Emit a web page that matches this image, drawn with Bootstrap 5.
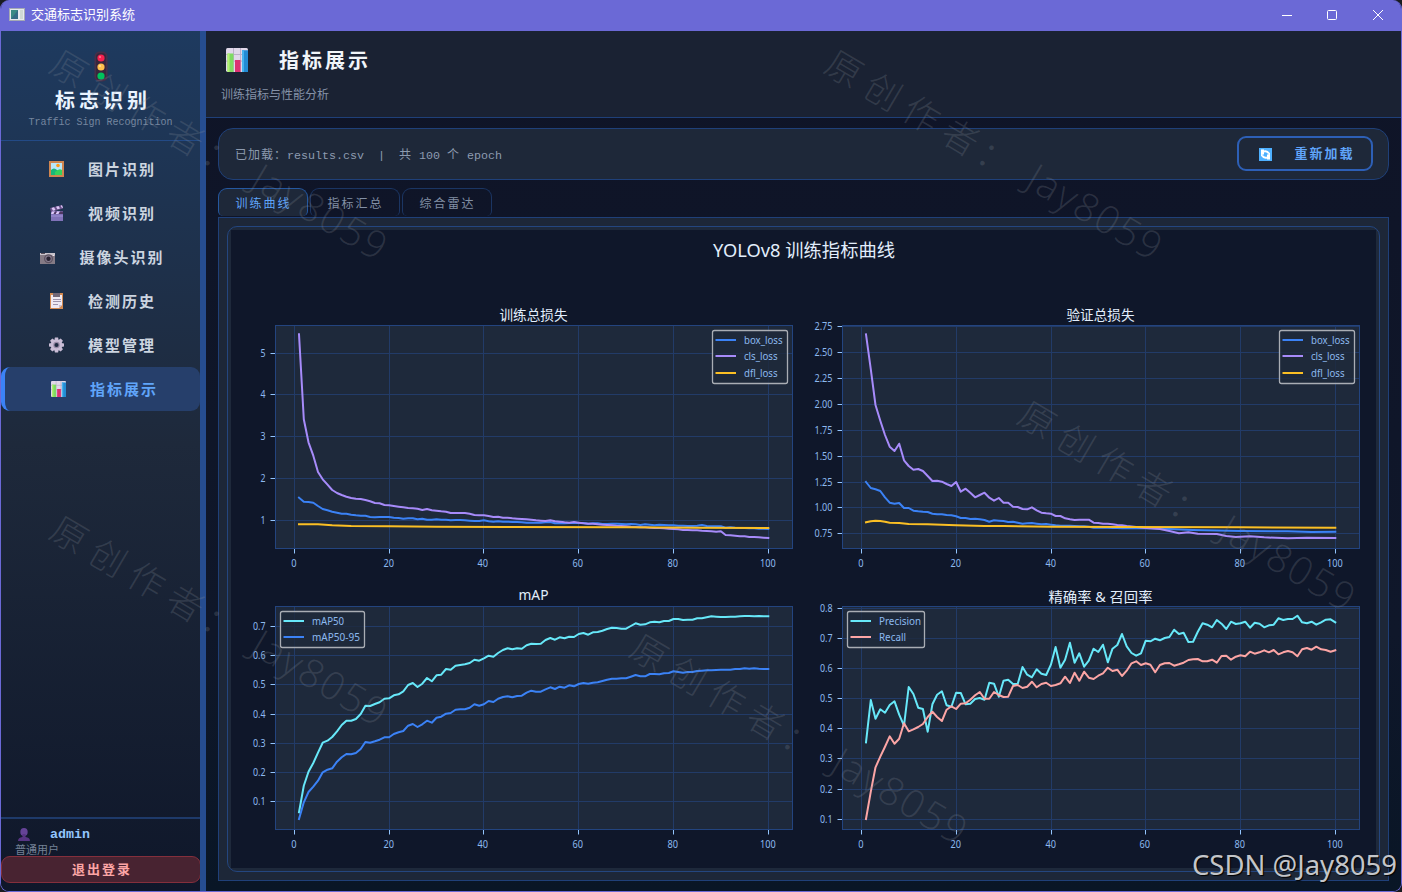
<!DOCTYPE html>
<html lang="zh-CN" data-bs-theme="dark">
<head>
<meta charset="utf-8">
<title>交通标志识别系统</title>
<link href="https://cdn.jsdelivr.net/npm/bootstrap@5.3.0/dist/css/bootstrap.min.css" rel="stylesheet">
<style>
  :root { --line:#1f4079; --panel:#1e2839; }
  body { background:#191b20; height:100vh; overflow:hidden; line-height:1; font-family:"Noto Sans","Noto Sans CJK SC",sans-serif; }
  svg { display:block; flex:none; }
  .window { height:892px; border:1px solid #6b69d6; border-top:0; border-radius:9px; overflow:hidden; background:#0f172a; }
  .titlebar { height:31px; flex:none; background:#6b69d6; color:#fff; font-size:13px; padding:0 17px 2px 8px; }
  .titlebar-text { margin-left:6px; }
  .side { width:199px; flex:none; background:linear-gradient(#1e3a5f 0,#1e293b 48%,#0f172a 100%); }
  .brand { height:110px; border-bottom:1px solid #234a86; padding-top:20px; }
  .brand-name { font-size:20px; font-weight:700; letter-spacing:4px; margin:9px 0 0 5px; color:#eaf4ff; }
  .brand-sub { font:10px/12px "Liberation Mono",monospace; color:#75869f; margin-top:6px; }
  .menu-item { height:44px; font-size:15px; font-weight:700; letter-spacing:2px; color:#ccd5e0; gap:24px; padding-left:4px; }
  .menu-item.active { background:#263f6b; color:#60a5fa; border-radius:9px; border-left:4px solid #3b82f6; }
  .user { border-top:2px solid #1e3a6a; height:74px; }
  .user-name { font:700 13.3px/14px "Liberation Mono",monospace; color:#93c5fd; }
  .user-role { font-size:11px; color:#748196; margin:2px 0 0 14px; }
  .logout { height:27px; background:#482331; border:1px solid #842f3c; border-radius:9px; color:#fca5a5; font-size:13px; font-weight:700; letter-spacing:2px; padding:0 0 0 2px; line-height:1; width:200px; }
  .splitter { width:6px; flex:none; background:#264d90; }
  .content { background:linear-gradient(#0f1427,#0f172a 70%,#091626); }
  .page-head { height:87px; flex:none; background:#1a2233; border-bottom:1px solid var(--line); padding:16px 0 0 15px; }
  .page-title { font-size:20px; font-weight:700; letter-spacing:3px; color:#f1f5f9; margin:2px 0 0 31px; }
  .page-sub { font-size:12px; color:#8592a8; margin-top:16px; }
  .toolbar { height:52px; margin:10px 12px 0; background:var(--panel); border:1px solid var(--line); border-radius:15px; padding:0 15px 1px 16px; }
  .info { white-space:pre; font-size:12px; letter-spacing:1px; color:#8d9bb0; padding-top:4px; }
  .info span { font:11.67px "Liberation Mono",monospace; letter-spacing:0; }
  .reload { width:136px; height:35px; border:2px solid #2d5fb6; border-radius:9px; color:#60a5fa; font-size:13px; font-weight:700; letter-spacing:2px; gap:22px; padding:1px 0 0 4px; }
  .reload:hover, .logout:hover { color:inherit; }
  .tabs { margin:8px 12px 0; gap:2px; height:29px; }
  .tab-btn { width:90px; height:28px; border:1px solid #1b3562; border-bottom:0; border-radius:9px 9px 5px 5px; font-size:12px; letter-spacing:2px; color:#8290a5; padding:2px 0 0 1px; }
  .tab-btn.active { background:var(--panel); border-color:#2558a0; color:#60a5fa; }
  .pane { margin:0 12px 10px; background:#1d2738; border:1px solid var(--line); padding:8px; min-height:0; }
  .frame-box { border:1px solid #24467f; border-radius:10px; padding:3px; height:100%; background:#1e293b; }
  .figure-svg { background:#0f172a; width:100%; height:100%; font-family:"Noto Sans","Noto Sans CJK SC",sans-serif; }
  .overlay { position:absolute; inset:0; pointer-events:none; }
</style>
</head>
<body>
<div class="window d-flex flex-column position-relative">
  <header class="titlebar d-flex align-items-center">
    <svg width="16" height="13" viewBox="0 0 16 13"><rect x=".5" y=".5" width="15" height="12" fill="#e6e9ee" stroke="#a5aab4"/><rect x="2" y="2" width="7" height="9" fill="#3a8a85"/><path d="M2 11 9 2v9z" fill="#346b86"/><path d="M11 2h3v9h-3z" fill="#cfd8d4"/></svg>
    <span class="titlebar-text">交通标志识别系统</span>
    <div class="ms-auto d-flex align-items-center">
      <svg width="102" height="12" viewBox="0 0 102 12" fill="none" stroke="#fff"><path d="M0 6.500h10"/><rect x="45.500" y="1.500" width="9" height="9" rx="1"/><path d="m91 1 10 10m0-10L91 11"/></svg>
    </div>
  </header>

  <div class="d-flex flex-grow-1" style="min-height:0">
    <aside class="side d-flex flex-column">
      <div class="brand d-flex flex-column align-items-center">
        <svg width="14" height="31" viewBox="0 0 14 31"><rect x=".5" y=".5" width="13" height="30" rx="5" fill="#46304a"/><rect x="2" y="2" width="10" height="27" rx="4" fill="#38273d"/><circle cx="7" cy="7" r="3.600" fill="#f8214e"/><circle cx="7" cy="16" r="3.600" fill="#ffc04d"/><circle cx="7" cy="25" r="3.600" fill="#00c35d"/><circle cx="6" cy="6" r="1" fill="#ff8196"/><circle cx="6" cy="15" r="1" fill="#ffe0a2"/></svg>
        <div class="brand-name">标志识别</div>
        <div class="brand-sub">Traffic Sign Recognition</div>
      </div>
      <nav class="d-flex flex-column flex-grow-1" style="padding-top:6px">
        <div class="menu-item d-flex align-items-center justify-content-center">
          <svg width="15" height="16" viewBox="0 0 15 16"><path fill="#cf8550" d="M0 0h15v16H0z"/><path fill="#b8e6fa" d="M2 2h11v12H2z"/><circle cx="9" cy="4.500" r="1.800" fill="#ff9b1a"/><path d="M2 9q3-3 6 0l5 5H2z" fill="#18b77a"/><path d="M6 11q4-4 7-2v5H6z" fill="#36d15e"/></svg><span>图片识别</span></div>
        <div class="menu-item d-flex align-items-center justify-content-center">
          <svg width="15" height="16" viewBox="0 0 15 16"><path d="M2 6h12v10H2z" fill="#8072b8"/><path d="M2 10h12v2H2z" fill="#9082c6"/><path d="m1 3 12-3 1 3.500L2 7z" fill="#6b528b"/><path d="m2.500 3 2.500-.8L6.500 5l-2.500.8zM7 1.800l2.500-.8L11 3.500l-2.500.8zM11.500.7 13 .2l1 2.500-1 .3zM3 6.500h3L4.500 9H2zM8 6.500h3L9.500 9h-3z" fill="#ddc8f8"/><path d="M6 6.500h2L6.500 9h-2zM11 6.500h3V9H9.500z" fill="#4e3762"/></svg><span>视频识别</span></div>
        <div class="menu-item d-flex align-items-center justify-content-center">
          <svg width="15" height="16" viewBox="0 0 15 16"><path d="M0 4h15v11H0z" fill="#857b86"/><path d="M0 4h15v2H0z" fill="#c9c4cc"/><path d="M1 4h4v1H1z" fill="#5a4e59"/><circle cx="8.500" cy="9.800" r="4.500" fill="#5c5260"/><circle cx="8.500" cy="9.800" r="3.200" fill="#8a7f92"/><circle cx="8.500" cy="9.800" r="2.200" fill="#292332"/><path d="M12.500 6h2v1h-2z" fill="#ece5ee"/></svg><span>摄像头识别</span></div>
        <div class="menu-item d-flex align-items-center justify-content-center">
          <svg width="15" height="16" viewBox="0 0 15 16"><path d="M1 0h13v16H1z" fill="#d28a52"/><path d="M2 2h11v10l-3 3H2z" fill="#eee9f3"/><path d="M10 15v-3h3z" fill="#c9bfd3"/><path d="M4 0h7v4H4z" fill="#716777"/><path d="M4 6.500h8M4 8.500h8M4 11.500h5" stroke="#9e93ab"/></svg><span>检测历史</span></div>
        <div class="menu-item d-flex align-items-center justify-content-center">
          <svg width="15" height="16" viewBox="-8 -8 16 16"><g fill="#c9bdd6"><circle r="6"/><path id="tooth" d="M-1.700-8h3.400l.8 4h-5zM-1.700 8h3.400l.8-4h-5z"/><use href="#tooth" transform="rotate(45)"/><use href="#tooth" transform="rotate(90)"/><use href="#tooth" transform="rotate(135)"/></g><circle r="3.400" fill="#978aa6"/><circle r="2.200" fill="#1e2b42"/></svg><span>模型管理</span></div>
        <div class="menu-item active d-flex align-items-center justify-content-center">
          <svg width="15" height="16" viewBox="0 0 22 22" preserveAspectRatio="none"><use href="#bars"/></svg><span>指标展示</span></div>
      </nav>
      <div class="user">
        <div class="d-flex align-items-center" style="padding:8px 0 0 17px;gap:20px">
          <svg width="12" height="15" viewBox="0 0 12 15"><ellipse cx="6" cy="5" rx="3.700" ry="4" fill="#654397"/><path d="M4.500 7h3v3q4.500.5 4.500 4H0q0-3.500 4.500-4z" fill="#573483"/></svg>
          <span class="user-name">admin</span>
        </div>
        <div class="user-role">普通用户</div>
        <button class="btn logout d-block" style="margin-top:1px">退出登录</button>
      </div>
    </aside>
    <div class="splitter"></div>

    <main class="content d-flex flex-column flex-grow-1" style="min-width:0">
      <div class="page-head">
        <div class="d-flex align-items-center" style="padding-left:5px">
          <svg width="22" height="24" viewBox="0 0 22 22" preserveAspectRatio="none"><g id="bars"><rect width="22" height="22" rx="1.500" fill="#e1d8e9"/><path d="M0 6h22M0 12h22M7.500 0v22M14.500 0v22" stroke="#bdb0ca"/><path d="M1.500 5h6v17h-6z" fill="#7edb62"/><path d="M1.500 5h2v17h-2z" fill="#b4ef72"/><path d="M9 11h5.500v11H9z" fill="#dc3172"/><path d="M16 2h6v20h-6z" fill="#238bd4"/><path d="M16 2h2v20h-2z" fill="#45b3ee"/></g></svg>
          <h1 class="page-title">指标展示</h1>
        </div>
        <div class="page-sub">训练指标与性能分析</div>
      </div>
      <div class="toolbar d-flex align-items-center justify-content-between flex-shrink-0">
        <div class="info">已加载：<span>results.csv  |  </span>共<span> 100 </span>个<span> epoch</span></div>
        <button class="btn reload d-flex align-items-center justify-content-center">
          <svg width="13" height="13" viewBox="0 0 13 13"><path d="M0 0h13v13H0z" fill="#4eb0ff"/><path d="M10 5.500Q8 2.500 5 3.500M3 7.500q2 3 5 2" fill="none" stroke="#fff" stroke-width="2"/><path d="M5 1.500v5H2v-5zM8 6.500h3v5H8z" fill="#fff"/><path d="M5 3 2 6.500V8h1zM8 10l3-3.500V5h-1z" fill="#fff"/></svg><span>重新加载</span></button>
      </div>
      <div class="tabs d-flex flex-shrink-0">
        <div class="tab-btn active d-flex align-items-center justify-content-center">训练曲线</div>
        <div class="tab-btn d-flex align-items-center justify-content-center">指标汇总</div>
        <div class="tab-btn d-flex align-items-center justify-content-center">综合雷达</div>
      </div>
      <div class="pane flex-grow-1">
        <div class="frame-box"><svg id="figure" class="figure-svg" viewBox="231 230 1145 638" preserveAspectRatio="none"></svg></div>
      </div>
    </main>
  </div>

  <svg class="overlay" width="1402" height="892" viewBox="1 0 1402 892">
    <defs>
      <g id="mark" fill="#8b929c" fill-opacity=".22">
        <text font-family="Noto Sans CJK SC, sans-serif" font-weight="300" font-size="36" x="-18 27 72 117 158" y="13">原创作者：</text>
        <text font-family="Open Sans, Noto Sans, sans-serif" font-weight="300" font-size="39" x="214" y="10" textLength="149">Jay8059</text>
      </g>
    </defs>
    <use href="#mark" transform="translate(69 69) rotate(30.500)"/>
    <use href="#mark" transform="translate(844 69) rotate(30.500)"/>
    <use href="#mark" transform="translate(1037 420) rotate(30.500)"/>
    <use href="#mark" transform="translate(69 535) rotate(30.500)"/>
    <use href="#mark" transform="translate(649 653) rotate(30.500)"/>
    <text x="1192" y="875" font-family="Noto Sans, sans-serif" font-size="27.500" textLength="205" lengthAdjust="spacingAndGlyphs" fill="#c3c5c9" style="text-shadow:1px 1px 1px #000">CSDN @Jay8059</text>
  </svg>
</div>

<script src="https://cdn.jsdelivr.net/npm/bootstrap@5.3.0/dist/js/bootstrap.bundle.min.js"></script>
<script>
const BLUE = '#3b82f6', PURPLE = '#a78bfa', AMBER = '#fbbf24', CYAN = '#67e8f9', PINK = '#fca5a5';
// Series: one number per epoch (third-pixel offsets from the row origin), or [epoch, offset] pairs.
const charts = [
  { x:275, y:325, x0:294, base:300, title:'训练总损失', tw:68, ty:320,
    ticks:{5:353,4:394,3:436,2:478,1:520}, legend:[712,330,76,54],
    series:[
      ['box_loss',38.5,BLUE,[593,605,606,608,618,627,631,635,638,641,641,644,646,647,647,651,652,651,651,651,653,654,656,655,655,658,656,659,659,658,659,659,661,660,660,661,662,663,663,661,664,665,664,665,665,666,666,667,668,668,668,668,667,666,670,669,670,669,668,669,669,671,670,670,672,672,671,671,672,673,672,673,675,673,674,676,674,675,676,676,677,677,678,678,677,675,678,679,679,679,683,682,683,684,684,685,685,686,686,687]],
      ['cls_loss',33.5,PURPLE,[103,358,427,467,516,538,554,570,579,585,590,594,596,597,600,604,609,610,615,616,618,620,622,624,625,626,630,627,631,632,634,635,639,639,639,639,641,645,646,646,648,651,650,653,653,655,656,657,658,659,661,662,663,661,664,665,667,668,666,668,670,671,671,673,674,675,676,677,678,679,680,681,682,682,683,684,684,685,686,687,688,690,690,691,691,692,693,694,695,694,705,706,707,709,709,711,711,712,713,714]],
      ['dfl_loss',33.5,AMBER,[[1,673],[5,673],[8,676],[12,678],[20,679],[30,680],[45,681],[70,682],[85,683],[100,684]]]] },
  { x:842, y:325, x0:861, base:300, title:'验证总损失', tw:68, ty:320,
    ticks:{'2.75':326,'2.50':352,'2.25':378,'2.00':404,'1.75':430,'1.50':456,'1.25':482,'1.00':507,'0.75':533}, legend:[1279,330,76,54],
    series:[
      ['box_loss',38.5,BLUE,[546,564,568,573,592,608,611,609,624,624,632,634,635,636,641,643,643,645,646,649,654,654,657,656,658,660,665,661,662,663,666,665,668,671,670,669,671,673,672,674,676,677,677,677,678,679,679,680,683,683,683,683,684,684,685,685].map((v,i)=>[i+1,v]).concat([[60,684],[65,687],[70,690],[80,693],[90,694],[95,696],[100,695]])],
      ['cls_loss',33.5,PURPLE,[103,208,315,362,405,440,453,431,481,498,509,507,513,528,543,542,545,552,558,546,575,566,578,592,585,578,593,602,594,608,608,620,621,627,628,622,631,638,640,641,648,648,655,658,660,659,659,659,668,669,671,671,673,675,676,678].map((v,i)=>[i+1,v]).concat([[60,684],[63,687],[65,693],[67,700],[69,697],[71,701],[75,702],[77,708],[79,711],[82,709],[85,712],[90,715],[94,713],[100,714]])],
      ['dfl_loss',33.5,AMBER,[[1,667],[2,664],[3,662],[4,663],[5,665],[6,668],[8,669],[10,672],[14,673],[20,676],[26,678],[30,678],[40,680],[56,681],[80,682],[100,683]]]] },
  { x:275, y:606, x0:294, base:580, title:'mAP', tw:30, ty:600,
    ticks:{'0.7':626,'0.6':655,'0.5':684,'0.4':714,'0.3':743,'0.2':772,'0.1':801}, legend:[280,611,85,37],
    series:[
      ['mAP50',32,CYAN,[697,617,575,549,518,488,482,471,454,435,422,422,417,402,377,378,372,367,356,355,346,343,334,315,309,321,311,294,304,286,284,267,269,257,255,253,249,239,242,235,227,230,219,210,205,208,205,206,196,191,192,191,180,174,179,172,175,170,171,162,159,164,157,156,152,147,143,144,146,146,138,130,134,133,127,125,127,123,123,117,117,120,119,119,115,115,112,109,110,111,111,110,110,109,108,108,109,108,109,109]],
      ['mAP50-95',48,BLUE,[717,667,636,620,602,577,569,565,545,532,522,523,519,507,486,488,484,479,472,472,462,457,453,437,432,441,433,422,428,413,410,401,399,389,388,388,383,373,377,373,363,366,356,351,349,352,348,347,338,332,335,335,328,322,327,320,323,316,319,312,309,311,308,307,303,299,296,296,295,295,290,285,289,289,282,282,283,280,279,274,276,278,276,276,273,272,271,271,270,269,269,269,267,267,265,266,265,266,267,267]]] },
  { x:842, y:606, x0:861, base:580, title:'精确率 & 召回率', tw:104, ty:601.5,
    ticks:{'0.8':608,'0.7':638,'0.6':668,'0.5':698,'0.4':728,'0.3':758,'0.2':789,'0.1':819}, legend:[847,611,78,37],
    series:[
      ['Precision',42,CYAN,[487,360,416,388,398,375,364,404,437,321,342,383,387,455,373,344,334,376,380,338,339,373,371,357,354,359,308,311,350,302,299,312,312,261,284,292,268,281,285,254,201,263,239,188,248,220,260,242,206,216,194,247,206,195,162,199,219,227,220,182,184,176,181,174,171,149,162,158,186,185,155,130,134,142,120,131,147,125,132,130,125,143,128,131,142,136,134,115,120,117,117,107,127,130,125,134,127,119,118,127]],
      ['Recall',27,PINK,[717,635,562,530,500,469,491,476,430,454,448,441,432,411,395,411,423,389,379,387,371,370,359,346,336,356,356,336,345,351,350,318,315,324,320,305,322,312,308,318,315,310,290,309,278,302,275,293,297,287,280,263,273,269,288,272,250,244,255,250,254,277,255,250,249,257,253,248,240,238,237,244,244,239,248,228,227,239,230,226,229,215,221,217,211,217,210,223,217,213,217,229,208,204,209,200,208,210,215,211]]] }
];
const label = (x, y, s, w, anchor, size = 10.7, fill = '#8db9ef') =>
  `<text x="${x}" y="${y}" font-size="${size}" fill="${fill}" text-anchor="${anchor}" textLength="${w}" lengthAdjust="spacingAndGlyphs">${s.replace('&', '&amp;')}</text>`;
let out = label(804, 257, 'YOLOv8 训练指标曲线', 182, 'middle', 18.3, '#e2eefc');
for (const c of charts) {
  const L = c.x + .5, R = L + 517, T = c.y + .5, B = T + 223;
  out += `<rect x="${L}" y="${T}" width="517" height="223" fill="#1e293b"/>`;
  [0, 95, 189, 284, 379, 474].forEach((d, i) => {
    const x = c.x0 + d + (c.x0 > 800 && i == 2 ? 1.5 : .5);
    out += `<path d="M${x} ${T}V${B}" stroke="#223b68"/><path d="M${x} ${B + .5}v4.500" stroke="#93c5fd"/>`
      + label(x - .7, B + 18.5, String(i * 20), i == 5 ? 15.7 : i ? 10.5 : 5.3, 'middle');
  });
  for (const [t, v] of Object.entries(c.ticks))
    out += `<path d="M${L} ${v + .5}H${R}" stroke="#223b68"/><path d="M${L - 5} ${v + .5}h4.500" stroke="#93c5fd"/>`
      + label(L - 10, v + 4.2, t, [0, 5, 0, 12.5, 18][t.length], 'end');
  out += `<rect x="${L}" y="${T}" width="517" height="223" fill="none" stroke="#23447f"/>`;
  out += label(L + 258, c.ty, c.title, c.tw, 'middle', 13.8, '#e2eefc');
  for (const s of c.series) {
    const pts = s[3].map((p, i) => Array.isArray(p) ? p : [i + 1, p])
      .map(([e, v]) => (c.x0 + .3 + e * 4.74).toFixed(1) + ',' + (c.base + v / 3).toFixed(1));
    out += `<polyline points="${pts.join(' ')}" fill="none" stroke="${s[2]}" stroke-width="2" stroke-linejoin="round" stroke-linecap="square"/>`;
  }
  const [lx, ly, lw, lh] = c.legend;
  out += `<rect x="${lx + .5}" y="${ly + .5}" width="${lw - 1}" height="${lh - 1}" rx="2" fill="#1e293b" fill-opacity=".8" stroke="#a9adb4" stroke-width="1.300"/>`;
  c.series.forEach((s, i) => {
    const y = ly + 9.6 + i * 16.7;
    out += `<path d="M${lx + 3.5} ${Math.round(y)}h20.500" stroke="${s[2]}" stroke-width="2"/>` + label(lx + 32, y + 3.9, s[0], s[1], 'start');
  });
}
document.getElementById('figure').innerHTML = out;
</script>
</body>
</html>
